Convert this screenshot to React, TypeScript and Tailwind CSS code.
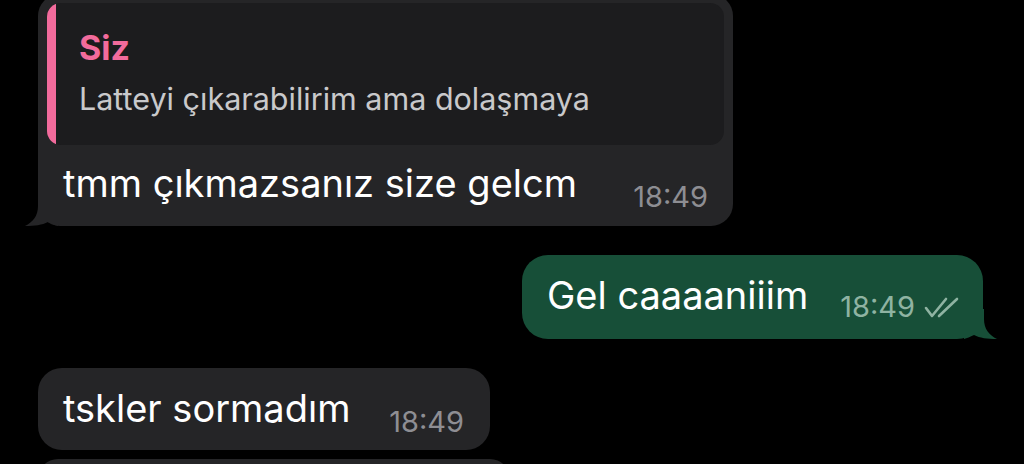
import React from "react";

function LeftTail() {
  return (
    <svg className="absolute left-[-14px] bottom-0" width="34" height="30" viewBox="0 0 34 30">
      <path d="M14 0 L14 10 C14 20 9 26 1 30 C11 30 18 29 24 26 C28 28 31 29 34 30 L34 0 Z" fill="#252527" />
    </svg>
  );
}

function RightTail() {
  return (
    <svg className="absolute right-[-15px] bottom-0" width="34" height="30" viewBox="0 0 34 30">
      <path d="M20 0 L20 10 C20 20 25 26 33 30 C23 30 16 29 10 26 C6 28 3 29 0 30 L0 0 Z" fill="#174f38" />
    </svg>
  );
}

function Checks() {
  return (
    <svg className="mt-[5px]" width="38" height="22" viewBox="0 0 38 22" fill="none" stroke="#8fb3a2" strokeWidth="2.6" strokeLinecap="round" strokeLinejoin="round">
      <path d="M3 11 L9 19 L23 2" />
      <path d="M16 19 L34 2" />
    </svg>
  );
}

export default function App() {
  return (
    <div
      className="w-[1024px] h-[464px] bg-black overflow-hidden flex flex-col"
      style={{ fontFamily: "Inter, 'Noto Sans', sans-serif" }}
    >
      {/* Incoming bubble with reply */}
      <div className="relative shrink-0 ml-[38px] mt-[-6px] w-[695px] h-[232px] bg-[#252527] rounded-[22px] pt-[9px] px-[9px]">
        <div className="relative h-[142px] bg-[#1c1c1e] rounded-[14px] overflow-hidden pl-[32px] pt-[28px]">
          <div className="absolute left-0 top-0 bottom-0 w-[9px] bg-[#f26b9c]" />
          <div className="text-[34px] leading-[34px] font-bold text-[#f26b9c]">Siz</div>
          <div className="text-[30.5px] leading-[30px] mt-[19px] text-[#c9c9cb] whitespace-nowrap">
            Latteyi çıkarabilirim ama dolaşmaya
          </div>
        </div>
        <div className="flex items-start pl-[16px] pr-[16px] mt-[19px]">
          <span className="text-[38px] leading-[38px] text-white whitespace-nowrap">tmm çıkmazsanız size gelcm</span>
          <span className="ml-auto mt-[18px] text-[29px] leading-[29px] text-[#8e8e93]">18:49</span>
        </div>
        <LeftTail />
      </div>

      {/* Outgoing bubble */}
      <div className="relative shrink-0 self-end mr-[41px] mt-[29px] w-[461px] h-[84px] bg-[#174f38] rounded-[26px] flex items-start pl-[25px] pr-[22px]">
        <span className="mt-[21px] text-[38px] leading-[38px] text-white whitespace-nowrap">Gel caaaaniiim</span>
        <span className="ml-auto mt-[37px] flex items-start gap-[8px]">
          <span className="text-[29px] leading-[29px] text-[#8fb3a2]">18:49</span>
          <Checks />
        </span>
        <RightTail />
      </div>

      {/* Incoming bubble */}
      <div className="relative shrink-0 ml-[38px] mt-[29px] w-[452px] h-[82px] bg-[#252527] rounded-[24px] flex items-start pl-[25px] pr-[26px]">
        <span className="mt-[21px] text-[38px] leading-[38px] text-white whitespace-nowrap">tskler sormadım</span>
        <span className="ml-auto mt-[39px] text-[29px] leading-[29px] text-[#8e8e93]">18:49</span>
      </div>

      {/* Next bubble peeking */}
      <div className="shrink-0 ml-[38px] mt-[9px] w-[472px] h-[40px] bg-[#252527] rounded-[24px]" />
    </div>
  );
}
